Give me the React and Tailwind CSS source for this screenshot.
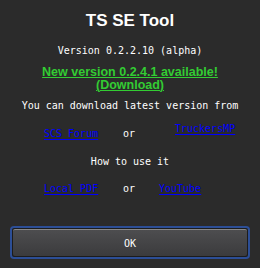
import React from "react";

export default function App() {
  const monoCls = "text-[10px] leading-[13px] font-['DejaVu_Sans_Mono',monospace]";
  const linkCls =
    monoCls + " text-[#0000ff] underline decoration-1 underline-offset-[2px] whitespace-nowrap";
  return (
    <div className="w-[260px] h-[268px] bg-[#2b2b2b] flex flex-col items-center overflow-hidden">
      <div className="mt-[11px] text-[17px] leading-[20px] font-bold text-white font-['Liberation_Sans',Arial,sans-serif]">
        TS SE Tool
      </div>
      <div className={"mt-[13px] text-white " + monoCls}>Version 0.2.2.10 (alpha)</div>
      <div className="mt-[9px] text-center text-[12.5px] leading-[13px] font-bold text-[#33cc33] underline decoration-1 underline-offset-[1px] font-['Liberation_Sans',Arial,sans-serif]">
        New version 0.2.4.1 available!
        <br />
        (Download)
      </div>
      <div className={"mt-[7px] text-white whitespace-nowrap " + monoCls}>
        You can download latest version from
      </div>
      <div className="mt-[10px] w-full flex items-start pl-[44px]">
        <span className={"mt-[5px] w-[79px] " + linkCls}>SCS Forum</span>
        <span className={"mt-[5px] w-[52px] text-white " + monoCls}>or</span>
        <span className={linkCls}>TruckersMP</span>
      </div>
      <div className={"mt-[15px] text-white " + monoCls}>How to use it</div>
      <div className="mt-[14px] w-full flex items-start pl-[44px]">
        <span className={"w-[79px] " + linkCls}>Local PDF</span>
        <span className={"w-[36px] text-white " + monoCls}>or</span>
        <span className={linkCls}>YouTube</span>
      </div>
      <div className="mt-[31px] w-[240px] h-[33px] rounded-[4px] border-2 border-[#2c4e96] bg-[#1c1c1c] p-px">
        <div className="h-full rounded-[2px] border-t border-[#888888] bg-gradient-to-b from-[#4d4d4f] to-[#3b3b3d] flex items-center justify-center">
          <span className={"text-white " + monoCls}>OK</span>
        </div>
      </div>
    </div>
  );
}
